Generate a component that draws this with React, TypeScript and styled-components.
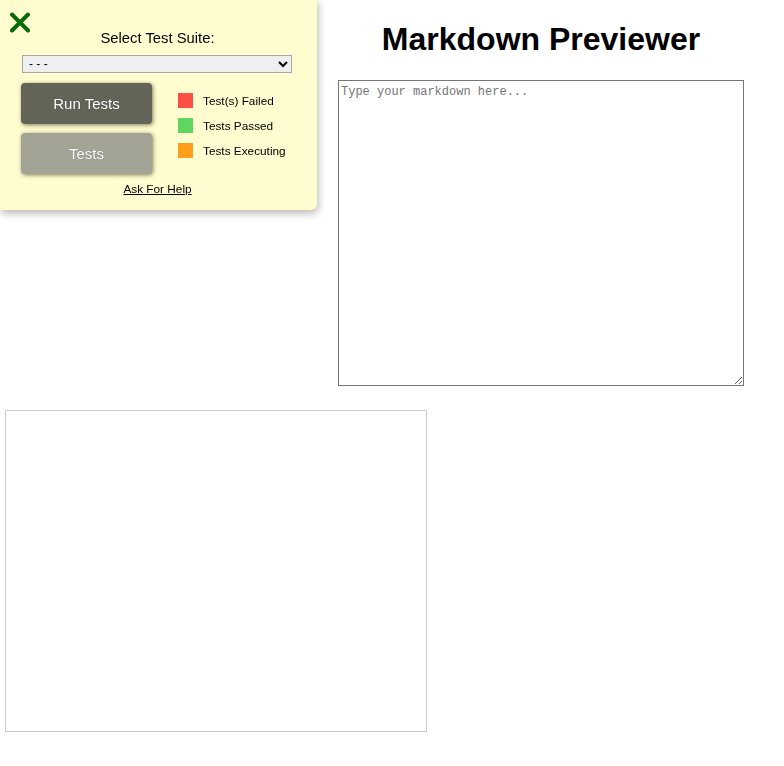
import React from "react";
import styled, { createGlobalStyle } from "styled-components";

const GlobalStyle = createGlobalStyle`
  html, body {
    margin: 0;
    padding: 0;
    background: #ffffff;
    font-family: "Liberation Sans", Arial, sans-serif;
    color: #000;
  }
  * { box-sizing: border-box; }
`;

const Page = styled.main`
  display: flex;
  flex-direction: column;
  align-items: stretch;
  width: 784px;
`;

const TopRow = styled.div`
  display: flex;
  justify-content: flex-end;
  padding-right: 40px;
`;

const EditorPane = styled.section`
  display: flex;
  flex-direction: column;
  width: 406px;
`;

const Title = styled.h1`
  margin: 21px 0 22px;
  font-size: 32px;
  line-height: 37px;
  font-weight: 700;
  text-align: center;
  font-family: "Liberation Sans", Arial, sans-serif;
`;

const Editor = styled.textarea`
  display: block;
  box-sizing: content-box;
  width: 400px;
  height: 300px;
  padding: 2px;
  margin: 0;
  border: 1px solid #767676;
  font-family: "Liberation Mono", "DejaVu Sans Mono", monospace;
  font-size: 12px;
  line-height: 18px;
  color: #000;
  &::placeholder { color: #757575; }
`;

const Preview = styled.div`
  box-sizing: content-box;
  width: 400px;
  height: 300px;
  padding: 10px;
  margin: 24px 0 0 5px;
  border: 1px solid #cccccc;
`;

/* Test panel overlay */
const Panel = styled.div`
  position: fixed;
  top: 0;
  left: 0;
  width: 317px;
  height: 210px;
  background: #fffdd0;
  border-radius: 0 0 6px 0;
  box-shadow: 1px 3px 8px rgba(0, 0, 0, 0.3);
  display: flex;
  flex-direction: column;
  align-items: center;
  padding-top: 30px;
  z-index: 10;
`;

const CloseButton = styled.button`
  position: absolute;
  top: 12px;
  left: 9px;
  width: 22px;
  height: 21px;
  padding: 0;
  border: none;
  background: transparent;
  display: flex;
  align-items: center;
  justify-content: center;
  cursor: pointer;
`;

const SuiteLabel = styled.label`
  font-size: 14.8px;
  line-height: 16px;
  color: #000;
  margin-left: -2px;
`;

const SuiteSelect = styled.select`
  align-self: flex-start;
  margin: 9px 0 0 22px;
  width: 270px;
  height: 18px;
  padding: 0 2px;
  font-family: "Liberation Sans", Arial, sans-serif;
  font-size: 12px;
  background: #efefef;
  border: 1px solid #a9a9a9;
  border-radius: 0;
  color: #000;
`;

const Body = styled.div`
  align-self: stretch;
  display: flex;
  margin-top: 10px;
  padding-left: 21px;
`;

const ButtonColumn = styled.div`
  display: flex;
  flex-direction: column;
  gap: 9px;
  width: 131px;
`;

const TestButton = styled.button<{ $tone: "dark" | "light" }>`
  height: 41px;
  width: 131px;
  border: none;
  border-radius: 4px;
  background: ${(p) => (p.$tone === "dark" ? "#636358" : "#a3a396")};
  color: #fff;
  font-family: "Liberation Sans", Arial, sans-serif;
  font-size: 15px;
  text-shadow: 0 0 1px rgba(0, 0, 0, 0.4);
  box-shadow: 1px 1px 4px rgba(40, 40, 0, 0.6);
  cursor: pointer;
`;

const Legend = styled.ul`
  list-style: none;
  margin: 10px 0 0 26px;
  padding: 0;
  display: flex;
  flex-direction: column;
  gap: 10px;
`;

const LegendItem = styled.li`
  display: flex;
  align-items: center;
  gap: 10px;
  height: 15px;
  font-size: 11.8px;
  color: #000;
`;

const Swatch = styled.span<{ $color: string }>`
  width: 15px;
  height: 15px;
  background: ${(p) => p.$color};
  flex: none;
`;

const HelpLink = styled.a`
  margin: 8px 0 0 -2px;
  font-size: 11.8px;
  line-height: 14px;
  color: #000;
  text-decoration: underline;
`;

export default function App() {
  return (
    <>
      <GlobalStyle />
      <Page>
        <TopRow>
          <EditorPane>
            <Title>Markdown Previewer</Title>
            <Editor id="editor" placeholder="Type your markdown here..." />
          </EditorPane>
        </TopRow>
        <Preview id="preview" />
      </Page>
      <Panel>
        <CloseButton aria-label="Close">
          <svg width="22" height="21" viewBox="0 0 22 21">
            <path
              d="M3 2.5 L19 18.5 M19 2.5 L3 18.5"
              stroke="#0a6a0a"
              strokeWidth="4"
              strokeLinecap="round"
              fill="none"
            />
          </svg>
        </CloseButton>
        <SuiteLabel htmlFor="suite">Select Test Suite:</SuiteLabel>
        <SuiteSelect id="suite" defaultValue="none">
          <option value="none">- - -</option>
        </SuiteSelect>
        <Body>
          <ButtonColumn>
            <TestButton $tone="dark">Run Tests</TestButton>
            <TestButton $tone="light">Tests</TestButton>
          </ButtonColumn>
          <Legend>
            <LegendItem>
              <Swatch $color="#ff5046" />
              Test(s) Failed
            </LegendItem>
            <LegendItem>
              <Swatch $color="#5fd65f" />
              Tests Passed
            </LegendItem>
            <LegendItem>
              <Swatch $color="#ff9f1c" />
              Tests Executing
            </LegendItem>
          </Legend>
        </Body>
        <HelpLink href="#">Ask For Help</HelpLink>
      </Panel>
    </>
  );
}
